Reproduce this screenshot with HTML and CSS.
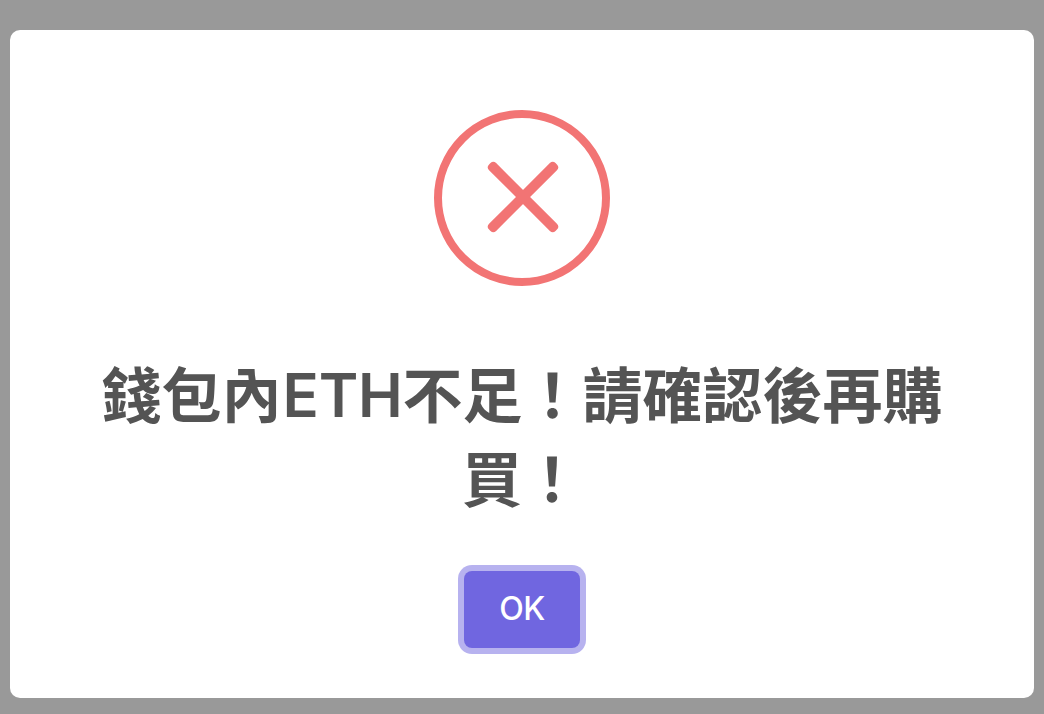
FILE: index.html
```html
<!DOCTYPE html>
<html lang="zh-Hant">
<head>
    <meta charset="UTF-8">
    <meta name="viewport" content="width=device-width, initial-scale=1.0">
    <title>ETH</title>
    <link rel="stylesheet" href="styles.css">
</head>
<body>
    <div class="overlay">
        <div class="popup" role="dialog">
            <svg class="icon-error" viewBox="0 0 176 176">
                <circle cx="88" cy="88" r="84"/>
                <rect x="42" y="82" width="94" height="10" rx="4" transform="rotate(45 89 87)"/>
                <rect x="42" y="82" width="94" height="10" rx="4" transform="rotate(-45 89 87)"/>
            </svg>
            <h2 class="title">錢包內<span class="latin">ETH</span>不足！請確認後再購買！</h2>
            <button class="confirm" type="button">OK</button>
        </div>
    </div>
</body>
</html>
```

FILE: styles.css
```css
* {
    box-sizing: border-box;
}
body {
    margin: 0;
    font-family: "Liberation Sans", "Noto Sans CJK TC", sans-serif;
}
.overlay {
    height: 714px;
    padding: 30px 10px 16px;
    background-color: #999;
}
.popup {
    display: flex;
    flex-direction: column;
    align-items: center;
    height: 668px;
    padding-top: 80px;
    background-color: #fff;
    border-radius: 10px;
}
.icon-error {
    width: 176px;
    height: 176px;
}
.icon-error circle {
    fill: none;
    stroke: #f27474;
    stroke-width: 8;
}
.icon-error rect {
    fill: #f27474;
}
.title {
    width: 900px;
    height: 168px;
    margin: 70px 0 0;
    color: #545454;
    font-size: 60px;
    font-weight: 700;
    line-height: 84px;
    text-align: center;
}
.latin {
    margin-left: 1px;
    font-family: Inter, sans-serif;
    font-weight: 600;
    letter-spacing: -0.3px;
    line-height: 1;
    vertical-align: 1px;
}
.confirm {
    width: 116px;
    height: 77px;
    margin-top: 47px;
    padding: 0 0 2px;
    border: 0;
    border-radius: 8px;
    background-color: #7066e0;
    box-shadow: 0 0 0 6px rgba(112, 102, 224, 0.5);
    color: #fff;
    font-family: Inter, sans-serif;
    font-size: 32px;
    font-weight: 500;
    letter-spacing: -0.5px;
}
```
